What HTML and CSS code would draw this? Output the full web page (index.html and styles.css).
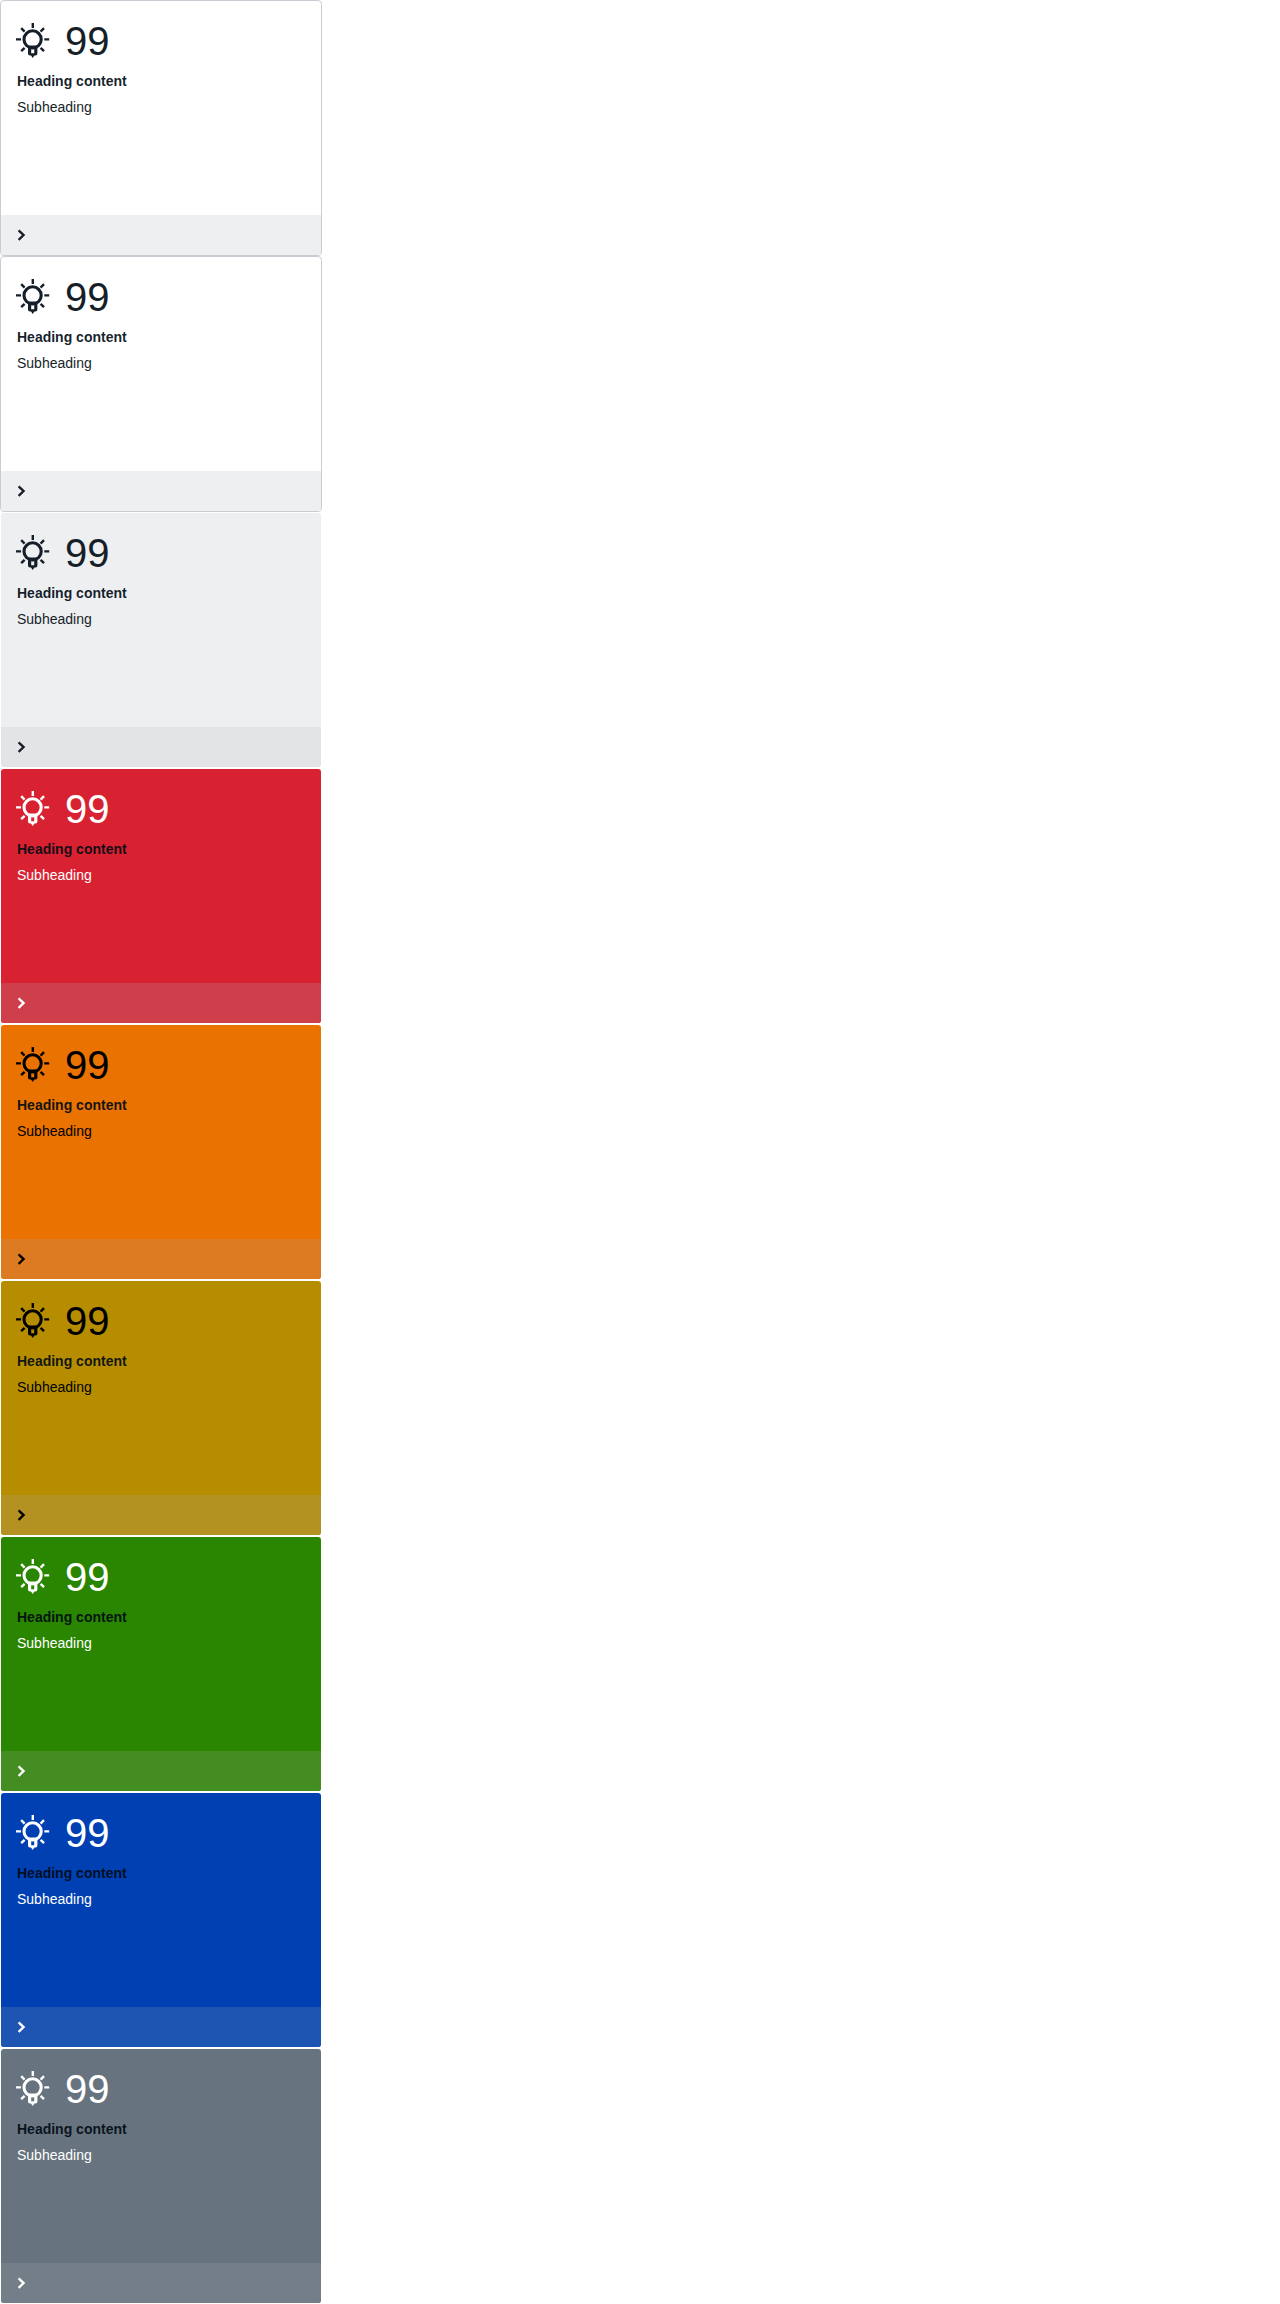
FILE: index.html
```
<!DOCTYPE html>
<html lang="en">
<head>
<meta charset="utf-8">
<title>Info tiles</title>
<link rel="stylesheet" href="styles.css">
</head>
<body>
<svg class="sprite" aria-hidden="true">
  <symbol id="bulb" viewBox="0 0 36 36">
    <g fill="none" stroke="currentColor" stroke-width="2.4">
      <circle cx="17.6" cy="16.4" r="8.6" stroke-width="3.1"/>
      <path d="M17.8 0v5M1 16.4h5M29.3 16.4h4.9M6.2 5.2l3.4 3.4M29 5.2l-3.4 3.4M6.2 28.2l3.4-3.4M29 28.2l-3.4-3.4"/>
    </g>
    <path fill="currentColor" fill-rule="evenodd" d="M13 22.5h9.4v8q0 2-2 2h-1L17.7 35 16 32.5h-1q-2 0-2-2zM16.2 25.8v4.4h3v-4.4z"/>
  </symbol>
  <symbol id="chevron" viewBox="0 0 9 12"><path d="M1.6 1.4L6.6 6.1l-5 4.7" fill="none" stroke="currentColor" stroke-width="2.3"/></symbol>
</svg>
<main class="tiles">
  <article class="tile bordered"><div class="body"><div class="top"><svg class="bulb"><use href="#bulb"/></svg><span class="value">99</span></div><h2>Heading content</h2><p>Subheading</p></div><footer><svg class="chevron"><use href="#chevron"/></svg></footer></article>
  <article class="tile bordered"><div class="body"><div class="top"><svg class="bulb"><use href="#bulb"/></svg><span class="value">99</span></div><h2>Heading content</h2><p>Subheading</p></div><footer><svg class="chevron"><use href="#chevron"/></svg></footer></article>
  <article class="tile light"><div class="body"><div class="top"><svg class="bulb"><use href="#bulb"/></svg><span class="value">99</span></div><h2>Heading content</h2><p>Subheading</p></div><footer><svg class="chevron"><use href="#chevron"/></svg></footer></article>
  <article class="tile red"><div class="body"><div class="top"><svg class="bulb"><use href="#bulb"/></svg><span class="value">99</span></div><h2>Heading content</h2><p>Subheading</p></div><footer><svg class="chevron"><use href="#chevron"/></svg></footer></article>
  <article class="tile orange"><div class="body"><div class="top"><svg class="bulb"><use href="#bulb"/></svg><span class="value">99</span></div><h2>Heading content</h2><p>Subheading</p></div><footer><svg class="chevron"><use href="#chevron"/></svg></footer></article>
  <article class="tile yellow"><div class="body"><div class="top"><svg class="bulb"><use href="#bulb"/></svg><span class="value">99</span></div><h2>Heading content</h2><p>Subheading</p></div><footer><svg class="chevron"><use href="#chevron"/></svg></footer></article>
  <article class="tile green"><div class="body"><div class="top"><svg class="bulb"><use href="#bulb"/></svg><span class="value">99</span></div><h2>Heading content</h2><p>Subheading</p></div><footer><svg class="chevron"><use href="#chevron"/></svg></footer></article>
  <article class="tile blue"><div class="body"><div class="top"><svg class="bulb"><use href="#bulb"/></svg><span class="value">99</span></div><h2>Heading content</h2><p>Subheading</p></div><footer><svg class="chevron"><use href="#chevron"/></svg></footer></article>
  <article class="tile gray"><div class="body"><div class="top"><svg class="bulb"><use href="#bulb"/></svg><span class="value">99</span></div><h2>Heading content</h2><p>Subheading</p></div><footer><svg class="chevron"><use href="#chevron"/></svg></footer></article>
</main>
</body>
</html>
```
FILE: styles.css
```
* { box-sizing: border-box; }
body { margin: 0; background: #fff; font-family: "Liberation Sans", Arial, sans-serif; }
.sprite { display: none; }
.tiles { display: flex; flex-direction: column; }
.tile {
  display: flex;
  flex-direction: column;
  width: 322px;
  height: 256px;
  border: 1px solid transparent;
  border-radius: 4px;
  background: var(--bg) padding-box;
  color: var(--fg);
  overflow: hidden;
}
.body { flex: 1; padding: 16px 16px 0; }
.top { display: flex; align-items: center; height: 48px; }
.bulb { width: 36px; height: 36px; margin: 0 14px 0 -2px; }
.value { font-size: 40px; line-height: 48px; }
h2 { margin: 6px 0 0; font-size: 14px; line-height: 20px; color: rgba(0, 10, 20, 0.91); }
p { margin: 6px 0 0; font-size: 14px; line-height: 20px; }
footer { display: flex; align-items: center; height: 40px; padding-left: 16px; background: var(--foot); }
.chevron { width: 9px; height: 12px; }
.bordered { --bg: #fff; --fg: #161f29; --foot: #eeeff1; border-color: #c9ccd2; }
.light { --bg: #eeeff1; --fg: #161f29; --foot: #e3e4e6; }
.red { --bg: #d92231; --fg: #fff; --foot: #cf3e4b; }
.orange { --bg: #e97200; --fg: #000; --foot: #dd7b22; }
.yellow { --bg: #b78d00; --fg: #000; --foot: #b39222; }
.green { --bg: #2a8500; --fg: #fff; --foot: #438d22; }
.blue { --bg: #0040b2; --fg: #fff; --foot: #1e54b2; }
.gray { --bg: #67737e; --fg: #fff; --foot: #737e88; }
```
